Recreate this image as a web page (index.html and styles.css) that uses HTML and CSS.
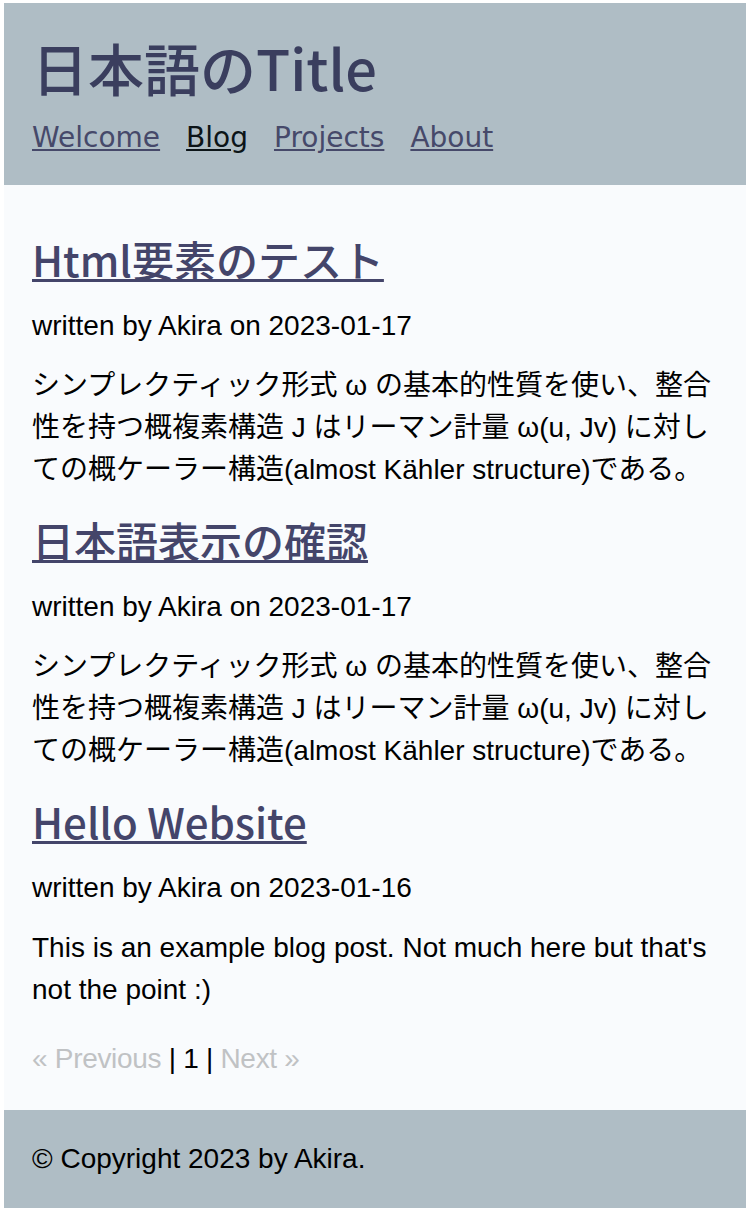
FILE: index.html
```html
<!DOCTYPE html>
<html lang="ja">
<head>
<meta charset="utf-8">
<title>日本語のTitle</title>
<link rel="stylesheet" href="styles.css">
</head>
<body>
<header class="site-header">
  <h1 class="site-title">日本語のTitle</h1>
  <nav class="site-nav">
    <a class="nav-link" href="#">Welcome</a>
    <a class="nav-link active" href="#">Blog</a>
    <a class="nav-link" href="#">Projects</a>
    <a class="nav-link" href="#">About</a>
  </nav>
</header>
<main class="content">
  <article class="post">
    <h2 class="post-title"><a href="#">Html要素のテスト</a></h2>
    <p class="post-meta">written by Akira on 2023-01-17</p>
    <p class="post-body">シンプレクティック形式 ω の基本的性質を使い、整合性を持つ概複素構造 J はリーマン計量 ω(u, Jv) に対しての概ケーラー構造(almost Kähler structure)である。</p>
  </article>
  <article class="post">
    <h2 class="post-title"><a href="#">日本語表示の確認</a></h2>
    <p class="post-meta">written by Akira on 2023-01-17</p>
    <p class="post-body">シンプレクティック形式 ω の基本的性質を使い、整合性を持つ概複素構造 J はリーマン計量 ω(u, Jv) に対しての概ケーラー構造(almost Kähler structure)である。</p>
  </article>
  <article class="post">
    <h2 class="post-title"><a href="#">Hello Website</a></h2>
    <p class="post-meta">written by Akira on 2023-01-16</p>
    <p class="post-body">This is an example blog post. Not much here but that's not the point :)</p>
  </article>
  <div class="pagination">
    <span class="page-disabled">« Previous</span> | 1 | <span class="page-disabled">Next »</span>
  </div>
</main>
<footer class="site-footer">
  <p class="copyright">© Copyright 2023 by Akira.</p>
</footer>
</body>
</html>
```

FILE: styles.css
```css
html {
  background: #ffffff;
}
body {
  margin: 3px 4px 5px 4px;
  background: #f9fbfd;
  font-family: "Liberation Sans", Arial, "Noto Sans CJK JP", sans-serif;
  font-size: 28px;
  line-height: 1.5;
  color: #000;
}
.site-header {
  background: #afbdc5;
  padding: 28px 28px 28px;
}
.site-title {
  margin: 0 0 15px;
  font-family: "Noto Sans CJK JP", sans-serif;
  font-weight: 500;
  font-size: 56px;
  line-height: 1.3;
  color: #3a3e5e;
}
.site-nav {
  display: flex;
  gap: 26px;
}
.nav-link {
  font-family: "DejaVu Sans", sans-serif;
  font-size: 28px;
  line-height: 1.35;
  color: #46496a;
}
.nav-link.active {
  color: #0c1418;
}
.content {
  padding: 42px 28px 30px;
}
.post {
  margin: 0;
}
.post-title {
  margin: 0;
  font-family: "Noto Sans CJK JP", sans-serif;
  font-weight: 500;
  font-size: 42px;
  line-height: 1.5;
}
.post-title a {
  color: #44456a;
  text-decoration-thickness: 3px;
}
.post-meta {
  margin: 15px 0 18px;
}
.post-body {
  margin: 0 0 17px;
}
.pagination {
  margin-top: 27px;
  line-height: 1.5;
  letter-spacing: -0.3px;
}
.page-disabled {
  color: #c0c2c4;
}
.site-footer {
  background: #afbdc5;
  padding: 28px 28px;
}
.copyright {
  margin: 0;
}
```
